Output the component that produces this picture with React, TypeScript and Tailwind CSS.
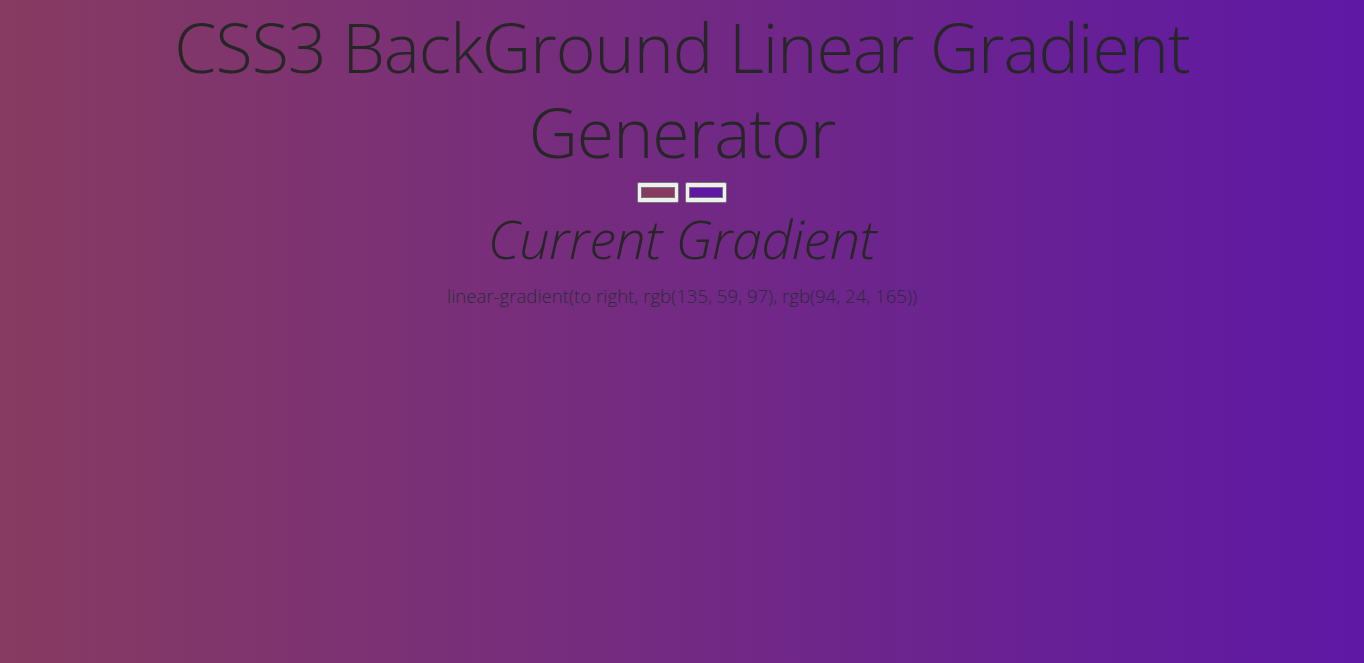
export default function App() {
  return (
    <div
      className="min-h-[663px] w-full bg-[linear-gradient(to_right,rgb(135,59,97),rgb(94,24,165))] text-center text-[#262626]"
      style={{ fontFamily: '"Open Sans", "Noto Sans", sans-serif' }}
    >
      <h1 className="mx-auto max-w-[1100px] pt-[4px] text-[68px] font-light leading-[85px] tracking-[-1px]">
        CSS3 BackGround Linear Gradient Generator
      </h1>
      <div className="mt-[8px] flex justify-center gap-[6px]">
        <div className="flex h-[21px] w-[42px] items-center justify-center rounded-[2px] border border-[#767676] bg-[#efefef]">
          <div className="h-[11px] w-[34px] border border-[#777] bg-[rgb(135,59,97)]" />
        </div>
        <div className="flex h-[21px] w-[42px] items-center justify-center rounded-[2px] border border-[#767676] bg-[#efefef]">
          <div className="h-[11px] w-[34px] border border-[#777] bg-[rgb(94,24,165)]" />
        </div>
      </div>
      <h2 className="mt-[3px] text-[54px] font-light italic leading-[64px] tracking-[-0.5px]">
        Current Gradient
      </h2>
      <p className="mt-[14px] text-[18.6px] font-light leading-[24px] text-[#2b2b3a]">
        linear-gradient(to right, rgb(135, 59, 97), rgb(94, 24, 165))
      </p>
    </div>
  );
}
